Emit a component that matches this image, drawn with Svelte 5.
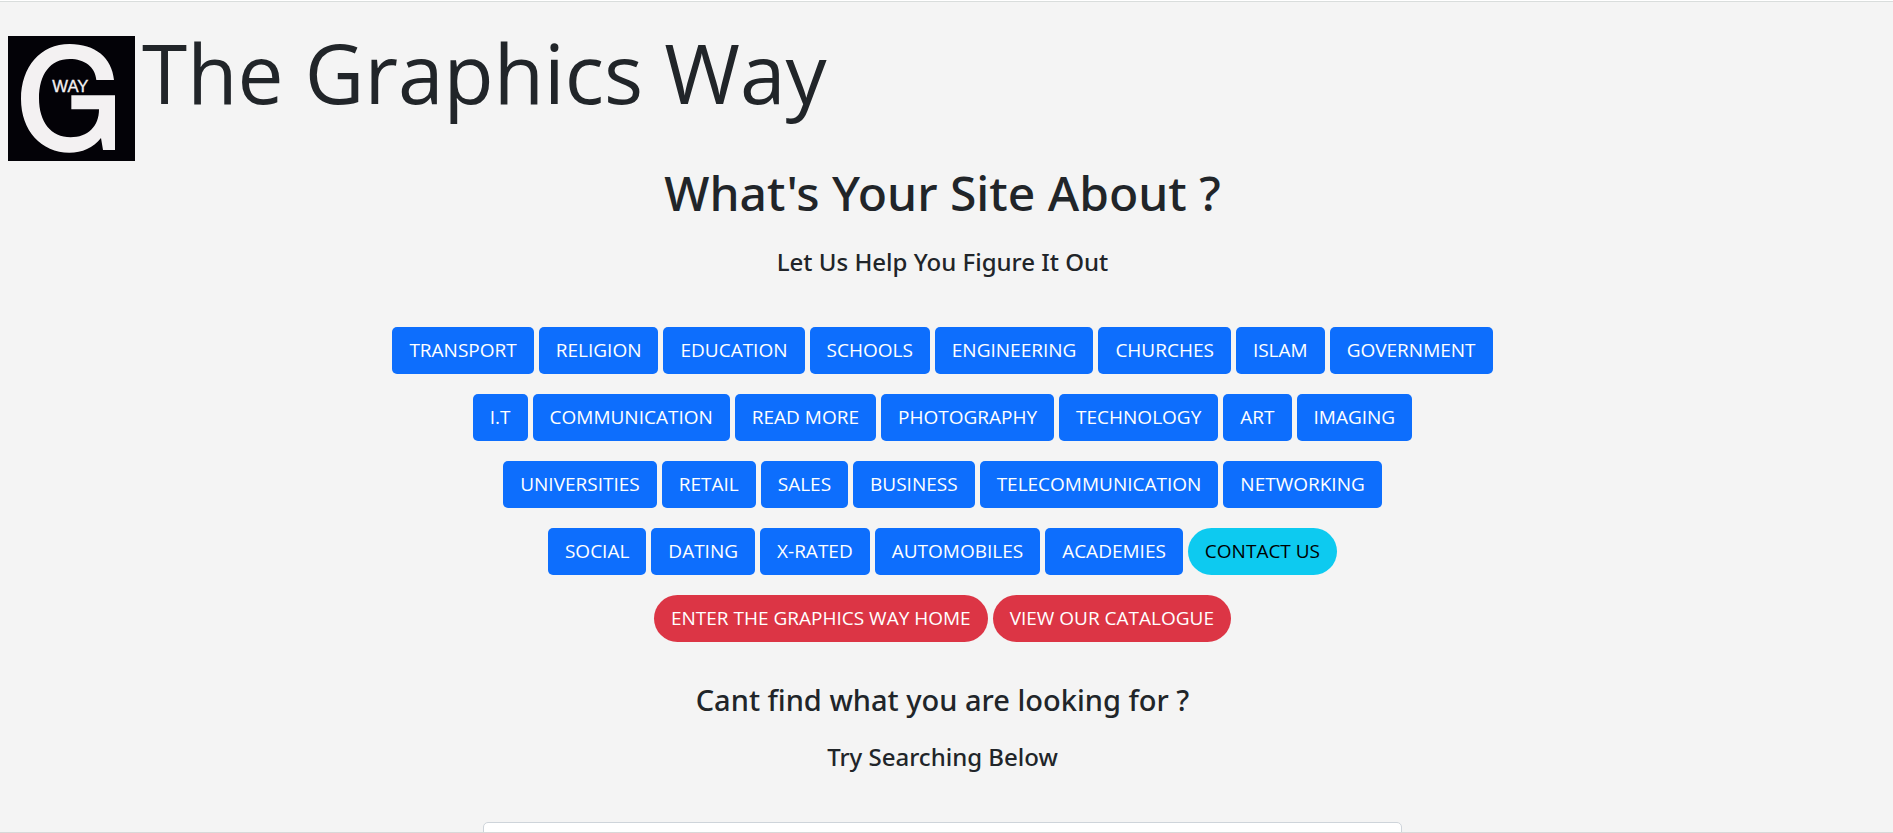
<script>
  const rows = [
    ['TRANSPORT', 'RELIGION', 'EDUCATION', 'SCHOOLS', 'ENGINEERING', 'CHURCHES', 'ISLAM', 'GOVERNMENT'],
    ['I.T', 'COMMUNICATION', 'READ MORE', 'PHOTOGRAPHY', 'TECHNOLOGY', 'ART', 'IMAGING'],
    ['UNIVERSITIES', 'RETAIL', 'SALES', 'BUSINESS', 'TELECOMMUNICATION', 'NETWORKING'],
    ['SOCIAL', 'DATING', 'X-RATED', 'AUTOMOBILES', 'ACADEMIES', 'CONTACT US'],
    ['ENTER THE GRAPHICS WAY HOME', 'VIEW OUR CATALOGUE'],
  ];
  const info = ['CONTACT US'];
  const danger = rows[4];
  let query = $state('');
</script>

<div class="page">
  <header>
    <svg class="logo" viewBox="24 108 381 375" preserveAspectRatio="none" role="img" aria-label="The Graphics Way logo">
      <rect x="24" y="108" width="381" height="375" fill="#030207" />
      <path
        fill="#f3f1f2"
        d="M342 240C336 173 285 132 209 132C121 132 63 201 63 297C63 392 124 458 208 458C247 458 279 444 303 414L309 450H345V286H214V328H297C297 380 263 412 212 412C153 412 117 366 117 295C117 223 151 177 209 177C254 177 285 200 289 240Z"
      />
      <text x="157" y="275" font-size="50" fill="#f3f1f2" stroke="#f3f1f2" stroke-width="1">WAY</text>
    </svg>
    <h1>The Graphics Way</h1>
  </header>

  <main>
    <h2>What's Your Site About ?</h2>
    <h4>Let Us Help You Figure It Out</h4>

    <nav class="topics" aria-label="Topics">
      {#each rows as row}
        <div class="row">
          {#each row as label}
            <button
              type="button"
              class="btn"
              class:info={info.includes(label)}
              class:danger={danger.includes(label)}>{label}</button>
          {/each}
        </div>
      {/each}
    </nav>

    <h3>Cant find what you are looking for ?</h3>
    <h4><label for="search">Try Searching Below</label></h4>
    <form class="search">
      <input id="search" type="search" bind:value={query} />
    </form>
  </main>
  <div class="edge"></div>
</div>

<style>
  :global(html) {
    scrollbar-width: none;
  }
  :global(body) {
    background: #f4f4f4;
  }
  .page {
    box-sizing: border-box;
    min-height: 100vh;
    padding-right: 8px;
    box-shadow: inset 0 1px #ffffff, inset 0 2px #d9dddc;
    color: #212529;
    font-family: 'Noto Sans', 'Segoe UI', sans-serif;
  }
  header {
    display: flex;
    align-items: flex-start;
    gap: 7px;
    padding: 20px 0 0 8px;
  }
  .logo {
    flex: none;
    width: 127px;
    height: 125px;
    margin-top: 16px;
    font-family: 'Liberation Sans', Arial, sans-serif;
  }
  h1,
  h2,
  h3,
  h4 {
    margin: 0;
    font-weight: 500;
  }
  h1 {
    font-family: 'Open Sans', 'Segoe UI', sans-serif;
    font-size: 82px;
    line-height: 104px;
    font-weight: 400;
  }
  main {
    display: flex;
    flex-direction: column;
    align-items: center;
    padding-top: 2px;
    text-align: center;
  }
  h2 {
    font-size: 48px;
    line-height: 60px;
  }
  h3 {
    margin-top: 40px;
    font-size: 29px;
    line-height: 36px;
  }
  h4 {
    margin-top: 24px;
    font-size: 24px;
    line-height: 30px;
  }
  .topics {
    display: flex;
    flex-direction: column;
    gap: 20px;
    margin-top: 50px;
  }
  .row {
    display: flex;
    flex-wrap: wrap;
    justify-content: center;
    gap: 5px;
  }
  .btn {
    padding: 9px 17px;
    border: 0;
    border-radius: 5px;
    background: #0d6efd;
    color: #ffffff;
    font: 400 19px/29px 'Open Sans', 'Segoe UI', sans-serif;
    cursor: pointer;
  }
  .info {
    border-radius: 24px;
    background: #0dcaf0;
    color: #000000;
  }
  .danger {
    border-radius: 24px;
    background: #dc3545;
  }
  .search {
    box-sizing: border-box;
    width: 50%;
    margin-top: 50px;
    padding: 0 12px;
  }
  .search input {
    box-sizing: border-box;
    display: block;
    width: 100%;
    height: 46px;
    padding: 8px 16px;
    border: 1px solid #ced4da;
    border-radius: 5px;
    background: #ffffff;
    font: inherit;
  }
  .edge {
    position: fixed;
    inset: auto 0 0;
    height: 1px;
    background: #d8d8d8;
  }
</style>
